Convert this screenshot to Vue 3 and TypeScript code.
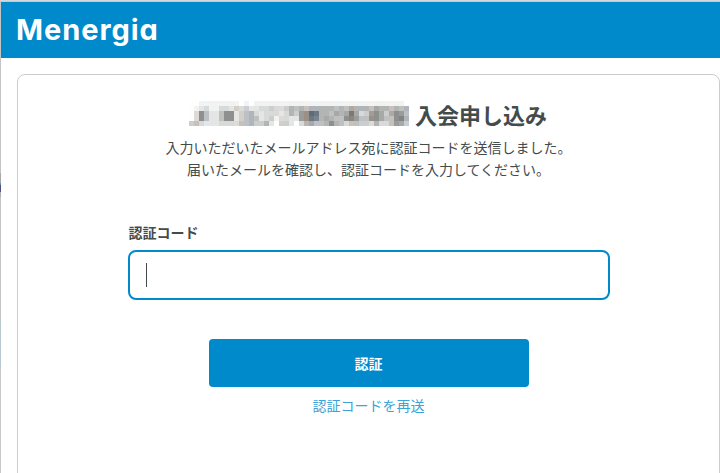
<script setup lang="ts">
import { ref } from 'vue'

const code = ref('')

// Pixelated organisation name: one hex digit per cell, f = white, 0 = darkest.
const mosaic: string[] = [
  'ffeeeeeeeefefeeeeeeeeeeeeeeeeeeeeeeeeeeeeeef',
  'fedceeccdbcbddccbccb9a9a99999a9a8999a899a9a9',
  'fc6adda66dba9cdcccdc9b763499a89848cb768b867a',
  'fc6adda66dba9adcbeccdd7645989aa657aa668aa659',
  'bacdddccccaa9bb9dfbbdfc98aa969acaabbc9cca78b',
]

const warmColumns = new Set([1, 9, 10, 18, 23, 32, 36, 40])
const coolColumns = new Set([3, 11, 12, 24, 25, 34, 43])

interface Cell { key: string; x: number; y: number; fill: string }

function cellColor(value: number, column: number): string {
  const tint = Math.round((255 - value) * 0.08)
  if (warmColumns.has(column)) return `rgb(${value + tint}, ${value}, ${value - tint})`
  if (coolColumns.has(column)) return `rgb(${value - tint}, ${value}, ${value + tint})`
  return `rgb(${value - 2}, ${value}, ${value})`
}

const cells: Cell[] = mosaic.flatMap((row, y) =>
  [...row].map((digit, x) => {
    const value = Math.round((parseInt(digit, 16) / 15) * 185) + 70
    return { key: `${x}-${y}`, x: x * 5, y: y * 5, fill: cellColor(value, x) }
  }),
)
</script>

<template>
  <div class="window">
    <header class="header"><span class="logo">Menergia</span></header>
    <main class="card">
      <h1 class="title">
        <svg class="mosaic" width="222" height="25" viewBox="0 0 222 25" shape-rendering="crispEdges">
          <rect v-for="c in cells" :key="c.key" :x="c.x" :y="c.y" width="5" height="5" :fill="c.fill" />
        </svg>
        <span>入会申し込み</span>
      </h1>
      <p class="lead">入力いただいたメールアドレス宛に認証コードを送信しました。<br />届いたメールを確認し、認証コードを入力してください。</p>
      <form class="form" @submit.prevent>
        <label class="label" for="code">認証コード</label>
        <div class="field">
          <span v-if="!code" class="caret"></span>
          <input id="code" v-model="code" class="input" type="text" autocomplete="one-time-code" />
        </div>
        <button class="submit" type="submit">認証</button>
        <a class="resend" href="#">認証コードを再送</a>
      </form>
    </main>
  </div>
</template>

<style>
body {
  overflow: hidden;
}
</style>

<style scoped>
.window {
  box-sizing: border-box;
  height: 473px;
  overflow: hidden;
  padding: 1px 0 0 1px;
  background:
    linear-gradient(#d4d8da, #d4d8da) 0 0 / 100% 1px no-repeat,
    linear-gradient(
      #c4c4c4 173px, #a8a8a8 173px, #a8a8a8 183px, #5994b0 183px, #5994b0 185px,
      #505080 185px, #505080 192px, #b0b0b0 192px, #b0b0b0 197px, #c4c4c4 197px,
      #c4c4c4 322px, #b8c8d0 322px, #b8c8d0 368px, #c8c8c8 368px
    ) 0 0 / 1px 100% no-repeat,
    #fff;
  color: #444b4b;
  font-family: "Noto Sans CJK JP", sans-serif;
}
.header {
  box-sizing: border-box;
  height: 57px;
  padding: 8px 0 0 15px;
  border-top: 1px solid #a8d4ea;
  background: #0089cb;
}
.logo {
  display: block;
  color: #fff;
  font: 650 29px/39px Inter, sans-serif;
  font-feature-settings: "cv11";
  letter-spacing: 0.95px;
}
.card {
  box-sizing: border-box;
  width: 703px;
  height: 440px;
  margin: 16px 0 0 16px;
  padding-top: 23px;
  border: 1px solid #ccc;
  border-radius: 8px;
}
.title {
  display: flex;
  align-items: center;
  gap: 4px;
  height: 32px;
  margin: 0;
  padding-left: 171px;
  font-size: 22px;
  font-weight: 700;
  line-height: 32px;
  white-space: nowrap;
}
.mosaic {
  flex: none;
  margin-top: -1px;
}
.lead {
  margin: 6px 0 0;
  font-size: 14px;
  line-height: 22.4px;
  text-align: center;
}
.form {
  display: flex;
  flex-direction: column;
  align-items: center;
  width: 482px;
  margin: 40.2px auto 0;
}
.label {
  align-self: flex-start;
  padding-left: 1px;
  font-size: 14px;
  font-weight: 700;
  line-height: 22px;
}
.field {
  box-sizing: border-box;
  display: flex;
  align-items: center;
  width: 482px;
  height: 50px;
  margin-top: 7px;
  padding: 0 17px 0 16px;
  border: 2px solid #0089cb;
  border-radius: 8px;
}
.caret {
  width: 1px;
  height: 24px;
  background: #444b4b;
}
.input {
  flex: 1;
  border: 0;
  outline: 0;
  background: transparent;
  font: inherit;
}
.submit {
  width: 320px;
  height: 48px;
  margin-top: 39px;
  padding: 0;
  border: 0;
  border-radius: 4px;
  background: #0089cb;
  color: #fff;
  font: 700 14px/22px "Noto Sans CJK JP", sans-serif;
}
.resend {
  margin-top: 7px;
  color: #3ba3d8;
  font-size: 14px;
  line-height: 22px;
  text-decoration: none;
}
</style>
